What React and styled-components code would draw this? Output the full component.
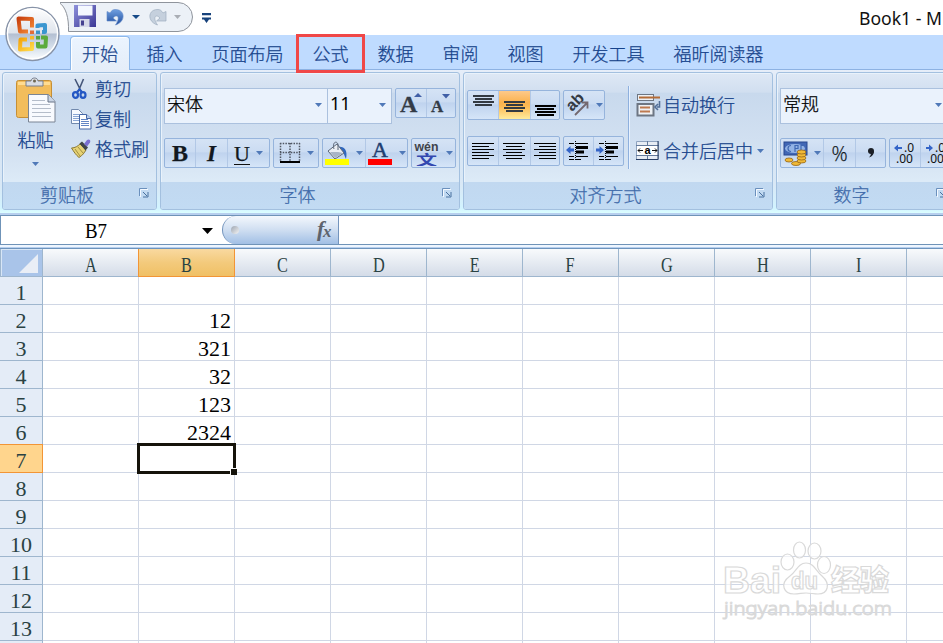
import styled, { createGlobalStyle, css } from "styled-components";

const UI_FONT = `"Noto Sans", "Noto Sans CJK SC", sans-serif`;
const CJK_FONT = `"Noto Sans CJK SC", sans-serif`;
const SHEET_FONT = `"Liberation Serif", "Noto Sans CJK SC", serif`;
const NAVY = "#15428b";

const GlobalStyle = createGlobalStyle`
  * { box-sizing: border-box; }
  body {
    margin: 0;
    overflow: hidden;
    background: #ffffff;
  }
  svg { display: block; flex: none; }
`;

const Window = styled.div`
  position: relative;
  width: 943px;
  height: 643px;
  overflow: hidden;
  font-family: ${CJK_FONT};
  font-weight: 300;
  font-size: 18px;
  color: ${NAVY};
`;

const TitleBar = styled.header`
  height: 35px;
  display: flex;
  justify-content: space-between;
  padding-left: 60px;
  background: #ffffff;
`;

const WindowTitle = styled.div`
  width: 84px;
  padding-top: 6px;
  font-family: ${UI_FONT};
  font-weight: 400;
  font-size: 17.6px;
  line-height: 24px;
  color: #111;
  white-space: nowrap;
`;

const OfficeButton = styled.div`
  position: absolute;
  left: 4px;
  top: 5px;
`;

const TabBar = styled.nav`
  height: 35px;
  display: flex;
  align-items: flex-end;
  padding-left: 70px;
  gap: 5px;
  background: #bfdbff;
  border-bottom: 1px solid #8db2e3;
  -webkit-text-stroke: 0.25px;
`;

const Tab = styled.div`
  height: 34px;
  margin-bottom: -1px;
  padding: 0 12px;
  line-height: 34px;
  white-space: nowrap;
  ${(p) =>
    p.$active &&
    css`
      padding: 0 10.5px 0 11px;
      border: 1px solid #8db8ea;
      border-bottom: 0;
      border-radius: 4px 4px 0 0;
      line-height: 32px;
      background: linear-gradient(#ebf4ff, #e7f0fb 60%, #e5eef9);
      box-shadow: inset 1px 1px 1px #ffffff;
    `}
`;

const RedFrame = styled.div`
  position: absolute;
  left: 296px;
  top: 34px;
  width: 69px;
  height: 39px;
  border: 3px solid #f04747;
`;

const Ribbon = styled.section`
  height: 143px;
  display: flex;
  gap: 3px;
  padding: 2px 0 3px 2px;
  border-left: 1px solid #8db2e3;
  margin-left: -1px;
  background: linear-gradient(#e6eef9, #d5e2f2 20%, #d9e8f6 80%, #d2f4ff 97%, #dcffff);
  -webkit-text-stroke: 0.25px;
`;

const Group = styled.div`
  width: ${(p) => p.$width}px;
  flex: none;
  display: flex;
  flex-direction: column;
  border: 1px solid #a3c0df;
  border-radius: 3px;
  overflow: hidden;
  background: linear-gradient(#dee8f5, #d1dff0 14%, #c8d9ed 15%, #d4e2f2 60%, #dceaf7 79%);
  box-shadow: inset 1px 1px 0 #e9f2fb;
`;

const GroupBody = styled.div`
  height: 110px;
  display: flex;
  flex-direction: ${(p) => (p.$row ? "row" : "column")};
  gap: ${(p) => p.$gap || 0}px;
  padding: ${(p) => p.$pad || "15px 3px 0"};
`;

const Caption = styled.div`
  height: 27px;
  flex: none;
  display: flex;
  align-items: center;
  justify-content: center;
  padding-right: ${(p) => p.$right ?? 7}px;
  background: linear-gradient(#c1d8f0, #c2dbf3);
  color: #3e6aaa;

  span {
    margin: 0 auto;
    padding: 0 ${(p) => p.$shift ?? 8}px 2px 0;
    line-height: 25px;
  }
  svg { margin-bottom: 5px; }
`;

const ToolRow = styled.div`
  display: flex;
  align-items: flex-start;
  gap: ${(p) => p.$gap ?? 3}px;
`;

const Column = styled.div`
  display: flex;
  flex-direction: column;
  gap: ${(p) => p.$gap || 0}px;
`;

const CommandList = styled(Column)`
  margin-top: -3px;
`;

const ToolSet = styled.div`
  display: flex;
  height: 30px;
  flex: none;
  border: 1px solid #96b4dc;
  border-radius: 2px;
  overflow: hidden;
  background: linear-gradient(#d5e3f5, #cbdcf2 45%, #bfd3ee 50%, #d5e5f8);
`;

const Tool = styled.button`
  width: ${(p) => p.$width}px;
  height: 28px;
  display: flex;
  align-items: center;
  justify-content: center;
  gap: 6px;
  padding: 0;
  border: 0;
  color: #111820;
  background: ${(p) =>
    p.$on ? "linear-gradient(#fdc98a, #fbb24d 42%, #fcba55 55%, #ffeb9d)" : "transparent"};

  & + & { border-left: 1px solid #b2c8e6; }
`;

const Glyph = styled.span`
  font-family: "Liberation Serif", serif;
  font-size: ${(p) => p.$size || 24}px;
  font-weight: ${(p) => (p.$bold ? 700 : 400)};
  font-style: ${(p) => (p.$italic ? "italic" : "normal")};
  line-height: 27px;
`;

const Underlined = styled(Glyph)`
  margin-top: 2px;
  line-height: 21px;
  border-bottom: 1px solid #111;
`;

const Percent = styled(Glyph)`
  font-family: "Open Sans", "Noto Sans", sans-serif;
  font-weight: 300;
`;

const Combo = styled.div`
  width: ${(p) => p.$width}px;
  height: 36px;
  flex: none;
  display: flex;
  align-items: center;
  justify-content: space-between;
  padding: 0 5px 6px 2px;
  border: 1px solid #abc1de;
  background: #eaf2fc;
  color: #000;
  font-family: ${(p) => (p.$latin ? UI_FONT : CJK_FONT)};
  font-weight: ${(p) => (p.$latin ? 400 : 300)};
  -webkit-text-stroke: ${(p) => (p.$latin ? "0" : "0.25px")};

  & + & { margin-left: -1px; }
  svg { margin-top: 4px; }
`;

const PasteButton = styled.div`
  width: 60px;
  display: flex;
  flex-direction: column;
  align-items: center;
  gap: 1px;
  padding-left: 1px;
  line-height: 27px;

  svg:last-child { margin-top: 8px; }
`;

const Command = styled.div`
  height: ${(p) => p.$height || 30}px;
  display: flex;
  align-items: center;
  gap: ${(p) => p.$gap || 4}px;
  white-space: nowrap;

  span { margin-top: -2px; }
`;

const Divider = styled.div`
  width: 2px;
  height: 83px;
  margin: -4px 6px 0 4px;
  background: #8eb0de;
  border-right: 1px solid #e8f2ff;
`;

const FormulaBar = styled.div`
  height: 36px;
  padding-top: 2px;
  background: #b7cfee;
  border-bottom: 1px solid #6d94bd;
`;

const FormulaInner = styled.div`
  height: 30px;
  display: flex;
  border: 1px solid #6f93b8;
  border-right: 0;
  background: #ffffff;
  box-shadow: 0 2px 0 #eef6ff;
`;

const NameBox = styled.div`
  width: 221px;
  display: flex;
  align-items: center;
  justify-content: space-between;
  padding: 2px 9px 0 84px;
  font: 22px ${SHEET_FONT};
  color: #000;
`;

const Narrow = styled.span`
  display: inline-block;
  font-size: 22px;
  transform: scaleX(${(p) => p.$by || 0.74});
  transform-origin: ${(p) => p.$origin || "center"};
`;

const FxHandle = styled.div`
  width: 117px;
  display: flex;
  align-items: center;
  justify-content: space-between;
  padding: 0 5px 0 8px;
  border: 1px solid #7394bd;
  border-width: 0 1px 0 1px;
  border-radius: 15px 0 0 15px;
  background: linear-gradient(#f4f8fd, #cfdef1 50%, #a1bfe5);
`;

const Knob = styled.i`
  width: 8px;
  height: 8px;
  border-radius: 50%;
  background: linear-gradient(135deg, #9ca5b1, #f4f4f4);
`;

const Sheet = styled.div`
  display: grid;
  grid-template-columns: 43px repeat(10, 96px);
  grid-auto-rows: 28px;
  font: 22px ${SHEET_FONT};
`;

const ColHead = styled.div`
  display: flex;
  align-items: center;
  justify-content: center;
  padding-top: 4px;
  border: solid #9eb6ce;
  border-width: 0 1px 1px 0;
  background: linear-gradient(#f8fafc, #e6ebf2 50%, #d4dce8);
  color: #2a4243;
  ${(p) =>
    p.$on &&
    css`
      background: linear-gradient(#f9d9a0, #f3ca7c 50%, #f0c065);
      border-color: #f29536;
      box-shadow: -1px 0 0 #f29536;
    `}
`;

const RowHead = styled.div`
  display: flex;
  align-items: center;
  justify-content: center;
  padding-top: 4px;
  border: solid #9eb6ce;
  border-width: 0 1px 1px 0;
  background: ${(p) => (p.$on ? "#ffd58d" : "#e4ecf7")};
  border-color: ${(p) => (p.$on ? "#f29536" : "#9eb6ce")};
  box-shadow: ${(p) => (p.$on ? "0 -1px 0 #f29536" : "none")};
  color: #2a4243;
`;

const Corner = styled.div`
  display: flex;
  align-items: flex-end;
  justify-content: flex-end;
  padding: 0 4px 3px 0;
  border: 1px solid #9eb6ce;
  border-top: 0;
  background: #a9c4e9;
  box-shadow: inset 1px 1px 0 #d8e6f6;
`;

const Cell = styled.div`
  position: relative;
  padding: 2px 3px 0 0;
  border: solid #d0d7e5;
  border-width: 0 1px 1px 0;
  text-align: right;
  line-height: 28px;
  color: #000;
`;

const Selection = styled.div`
  position: absolute;
  z-index: 1;
  left: -2px;
  top: -2px;
  width: 99px;
  height: 31px;
  border: 3px solid #15130a;

  &::after {
    content: "";
    position: absolute;
    right: -4px;
    bottom: -4px;
    width: 6px;
    height: 6px;
    background: #15130a;
    border: solid #fff;
    border-width: 1px 0 0 1px;
  }
`;

const Watermark = styled.svg`
  position: absolute;
  left: 716px;
  top: 536px;
`;

const Arrow = ({ size = 7, color = "#5079b8" }) => (
  <svg width={size} height={size / 2 + 0.5} viewBox="0 0 8 4" preserveAspectRatio="none">
    <path d="M0 0h8L4 4z" fill={color} />
  </svg>
);

const Launcher = () => (
  <svg width="10" height="10" fill="none" stroke="#6b90bd">
    <path d="M.5 8V.5H8" />
    <path d="M4 4l4 4M9 4v5H4" stroke="#49719f" />
    <path d="M1.5 9V1.5H9" stroke="#f4f9ff" />
  </svg>
);

const OfficeLogo = () => (
  <svg width="58" height="58" viewBox="0 0 58 58">
    <defs>
      <linearGradient id="orb" x2="0" y2="1">
        <stop stopColor="#ffffff" />
        <stop offset=".48" stopColor="#dfe4ec" />
        <stop offset=".5" stopColor="#b3bfd2" />
        <stop offset=".8" stopColor="#dce5ef" />
        <stop offset="1" stopColor="#ffffff" />
      </linearGradient>
      <linearGradient id="orange" x2="1" y2="1">
        <stop stopColor="#c8400f" />
        <stop offset="1" stopColor="#f58a35" />
      </linearGradient>
      <linearGradient id="yellow" x2="1" y2="1">
        <stop stopColor="#f5a50c" />
        <stop offset="1" stopColor="#ffd84a" />
      </linearGradient>
    </defs>
    <circle cx="28.5" cy="29" r="26.5" fill="url(#orb)" stroke="#8793a8" strokeWidth="1.4" />
    <circle cx="28.5" cy="28.7" r="25" fill="none" stroke="#fff" strokeWidth="1.3" />
    <g fill="none" strokeWidth="4" strokeLinejoin="round">
      <path d="M24 26.500h-8L14.500 13.500 28 14v8.500" stroke="url(#orange)" />
      <path d="M33.500 23v-2.500l7.500 -.5v7h-3" stroke="#3b96d0" />
      <path d="M23 34.500h-6.500l-.5 10 12-.5v-7" stroke="url(#yellow)" />
      <path d="M37 32.500h5l-.5 9h-7.500V37" stroke="#5cab3d" />
    </g>
    <path d="M26 25.500h4v3.500h-4z" fill="#e36c37" />
    <path d="M32 25.500h4v3.500h-4z" fill="#3c93c9" />
    <path d="M26 31h4v3.500h-4z" fill="#f7b82b" />
    <path d="M32 31h4v3.500h-4z" fill="#57a443" />
  </svg>
);

const QuickAccess = () => (
  <svg width="155" height="34" viewBox="60 0 155 34">
    <defs>
      <linearGradient id="disk" x2="1" y2="1">
        <stop stopColor="#8e91db" />
        <stop offset="1" stopColor="#3b3795" />
      </linearGradient>
      <linearGradient id="undo" x2="0" y2="1">
        <stop stopColor="#6f9fe0" />
        <stop offset="1" stopColor="#224f9e" />
      </linearGradient>
    </defs>
    <path d="M59 2.500H178A14.500 14.500 0 0 1 178 31.500H68.500C69 18 66 7 59 2.500z" fill="#ecf1f7" stroke="#8f949c" />
    <path d="M74 5h22v22H74z" fill="url(#disk)" />
    <path d="M78 5.500h14.500v10H78z" fill="#f4f8ff" />
    <path d="M79.500 19h10v8h-10z" fill="#d6d9e9" />
    <path d="M81 20.500h3v5h-3z" fill="#454190" />
    <path d="M107 11.500V21h9.500l-3.500-3c4-4.500 8-1 2.500 7 11-3.500 9.500-16-.5-15.500-2 0-3.500 1-5 3.500z" fill="url(#undo)" stroke="#5f88c8" strokeWidth=".6" />
    <path d="M166 11.500V21h-9.500l3.500-3c-4-4.500-8-1-2.500 7-11-3.500-9.500-16 .5-15.500 2 0 3.500 1 5 3.500z" fill="#c5d0dd" stroke="#9eadbf" strokeWidth=".7" />
    <path d="M132 15h8l-4 4z" fill="#164a88" />
    <path d="M174 15h7l-3.500 4z" fill="#a9adb4" />
    <path d="M202 13h9v2.300h-9zM202 17.500h9v2h-2l-2.500 3.500-2.500-3.500h-2z" fill="#17427b" />
  </svg>
);

const PasteIcon = () => (
  <svg width="42" height="48" viewBox="0 0 42 48">
    <rect x="1.500" y="3.500" width="35" height="37" rx="2" fill="#f2bd5c" stroke="#c68f35" />
    <path d="M3 5h32v3H3z" fill="#ffdc91" />
    <path d="M11 8V4h5c0-4 7-4 7 0h5v5H11z" fill="#d9dde3" stroke="#777f8c" />
    <circle cx="19.500" cy="4" r="1.500" fill="#6d6652" />
    <path d="M13.500 17.500h20l6.500 7v20.500H13.500z" fill="#f8fafe" stroke="#7a8494" />
    <path d="M33 17.500V25h7" fill="#c9d4e4" stroke="#687488" />
    <path d="M17 23.500h13M17 27.500h18M17 31.500h19M17 35.500h19M17 39.500h19" stroke="#b5bdca" />
  </svg>
);

const CutIcon = () => (
  <svg width="20" height="22" viewBox="0 0 20 22" fill="none">
    <path d="M4 1l6.500 13M12.500 1L7 14" stroke="#46577a" strokeWidth="1.600" />
    <ellipse cx="4.500" cy="17" rx="2.500" ry="2.800" stroke="#2458c4" strokeWidth="2.200" />
    <ellipse cx="12" cy="17" rx="2.500" ry="2.800" stroke="#2458c4" strokeWidth="2.200" />
    <path d="M6 14l2.500-2.500L11 14" stroke="#2458c4" strokeWidth="2" />
  </svg>
);

const CopyIcon = () => (
  <svg width="22" height="22" viewBox="0 0 22 22" stroke="#7189ad">
    <path d="M.5 1.500h7l4 4v10H.5z" fill="#f8fbff" />
    <path d="M2 6.500h6M2 8.500h7M2 10.500h7M2 12.500h7" stroke="#89a6d3" />
    <path d="M8.500 6.500h7l4.500 4v10.500H8.500z" fill="#fff" stroke="#4567a6" />
    <path d="M10 11.500h7M10 13.500h8M10 15.500h8M10 17.500h8" stroke="#6285c4" />
    <path d="M15.500 6.500v4H20" fill="#b9cdec" stroke="#4567a6" />
  </svg>
);

const BrushIcon = () => (
  <svg width="22" height="20" viewBox="0 0 22 20">
    <path d="M.5 9C4 9 7 7 9 5l6 6c-2 3-3 5-7 7.500C5 16 3 13 .5 9z" fill="#e6d274" stroke="#8a7834" />
    <path d="M4 10l5 7M7 8l5 6" stroke="#a39044" />
    <path d="M8.500 4.500l2.500-2 6 6-2.500 3z" fill="#40454a" />
    <path d="M13 5l3-4c2-1.500 4 0 3 2.500l-3 4z" fill="#7b6fd0" />
  </svg>
);

const BordersIcon = () => (
  <svg width="22" height="22" fill="none" stroke="#4f5662">
    <path d="M1.500 1v18M11 1v18M20.500 1v18M1 1.500h20M1 10.500h20" strokeWidth="1.500" strokeDasharray="1.500 1.200" />
    <path d="M1 20h20" stroke="#000" strokeWidth="2" />
  </svg>
);

const FillIcon = () => (
  <svg width="25" height="24" viewBox="0 0 25 24">
    <path d="M13 6c6-1 10 3 8 12-2-4-2-7-5-9z" fill="#3168bd" />
    <path d="M3 10l9-7 7 9-9 6z" fill="#e9edf3" stroke="#5b6778" />
    <path d="M5 11l8 0 5 1-8 5z" fill="#a8b4c6" />
    <path d="M9 8c-2-6 2-9 4-5v6" fill="none" stroke="#5b6778" />
    <path d="M0 18h24v6H0z" fill="#ffff00" />
  </svg>
);

const FontColorIcon = () => (
  <svg width="25" height="24">
    <text x="12" y="16" textAnchor="middle" fontFamily="Liberation Serif, serif" fontSize="22" fill="#203d70" stroke="#203d70" strokeWidth=".5">A</text>
    <path d="M0 18h24v6H0z" fill="#ff0000" />
  </svg>
);

const PinyinIcon = () => (
  <svg width="26" height="26">
    <text x="12.500" y="11" textAnchor="middle" fontFamily="Liberation Sans, sans-serif" fontSize="13" fontWeight="700" textLength="24" lengthAdjust="spacingAndGlyphs" fill="#3f434a">wén</text>
    <text x="12.500" y="24.500" textAnchor="middle" fontFamily="Noto Sans CJK SC, sans-serif" fontSize="14" fontWeight="700" textLength="21" lengthAdjust="spacingAndGlyphs" fill="#3348af">文</text>
  </svg>
);

const SizeLetter = ({ size, up }) => (
  <svg width="28" height="26">
    <text x={up ? 3 : 4} y="21.500" fontFamily="Liberation Serif, serif" fontWeight="700" fontSize={size} fill="#333b46" stroke="#333b46" strokeWidth=".3">A</text>
    <path d={up ? "M17 7h8l-4-4z" : "M15 4h8l-4 4.500z"} fill="#405fa6" />
  </svg>
);

// every entry is [left, right] of one text line
const LINES = {
  top: [[2, 23], [4, 21], [2, 23], [4, 21]],
  left: [[0, 22], [0, 17], [0, 22], [0, 17], [0, 22], [0, 17]],
  center: [[0, 22], [3, 19], [0, 22], [3, 19], [0, 22], [3, 19]],
  right: [[0, 22], [5, 22], [0, 22], [5, 22], [0, 22], [5, 22]],
};

const AlignIcon = ({ kind, offset = 0, tight }) => (
  <svg width={tight ? 25 : 23} height="26" stroke={tight && offset < 12 ? "#333a42" : "#000"}>
    {LINES[tight ? "top" : kind].map(([a, b], i) => (
      <path
        key={i}
        d={`M${a} ${tight ? offset + i * 3 : 5.5 + i * 3}H${b}`}
        strokeWidth={tight ? 1.8 : 1}
      />
    ))}
  </svg>
);

const OrientIcon = () => (
  <svg width="25" height="25">
    <text transform="translate(7 19) rotate(-45)" fontFamily="Liberation Sans, sans-serif" fontWeight="700" fontSize="16" fill="#343a43">ab</text>
    <path d="M10 22L22 10M16.500 9.500h6v6" fill="none" stroke="#73686f" strokeWidth="1.800" />
  </svg>
);

const IndentIcon = ({ right }) => (
  <svg width="25" height="22" stroke="#000">
    <path d="M3 3.500h5M3 16.500h5M10 3.500h12M10 16.500h12M3 19.500h5M10 19.500h5" />
    <path d="M10 7.500h12" strokeWidth="3" />
    <path d="M10 12h8" strokeWidth="3" />
    <path d="M9.500 1v20" strokeDasharray="1 1" />
    <path
      d={right ? "M8 10L3.500 6v2.500H0v3h3.500v2.500z" : "M0 10L4.500 6v2.500H8v3H4.500v2.500z"}
      fill="#3465c8"
      stroke="none"
    />
  </svg>
);

const WrapIcon = () => (
  <svg width="25" height="24">
    <rect x="1.500" y="1.500" width="16" height="6" fill="#eef1f5" stroke="#6d7683" />
    <path d="M3 4.500h21" stroke="#b36c38" strokeWidth="2" />
    <rect x="1.500" y="11" width="16" height="11.500" fill="#eef1f5" stroke="#6d7683" strokeWidth="2" />
    <path d="M4 14.500h10M4 18.500h10" stroke="#bd7a50" strokeWidth="2" />
    <path d="M23.500 8v6h-2.500M22 11l-3 3 3 3" fill="none" stroke="#526f98" strokeWidth="1.600" />
  </svg>
);

const MergeIcon = () => (
  <svg width="23" height="20">
    <path d="M.5.5h22v18H.5z" fill="#e8edf4" stroke="#8fa3bf" />
    <path d="M0 4.500h23M0 14.500h23M11.500 0v4M11.500 15v4" stroke="#647a9b" />
    <path d="M1 5h21v9H1z" fill="#fff" />
    <path d="M2 9.500h5M4 7.500L2 9.500l2 2M21 9.500h-5M19 7.500l2 2-2 2" fill="none" stroke="#111" />
    <text x="11.500" y="13" textAnchor="middle" fontFamily="Liberation Sans, sans-serif" fontWeight="700" fontSize="11">a</text>
    <path d="M22 0v18.500H0" fill="none" stroke="#283e65" />
  </svg>
);

const CurrencyIcon = () => (
  <svg width="25" height="26">
    <rect x="1" y="2" width="23" height="13" fill="#4167b5" stroke="#28498f" />
    <ellipse cx="12" cy="8.500" rx="10" ry="4.500" fill="#93b3e5" />
    <path d="M8 5.500c-4 0-4 6 0 6M12 12V5.500h3v3h-3M18 12V5.500h3" fill="none" stroke="#3f68b2" strokeWidth="1.200" />
    <g fill="#f0b936" stroke="#93651a" strokeWidth=".8">
      <ellipse cx="6" cy="20" rx="4" ry="2" />
      <ellipse cx="13" cy="23.500" rx="4.500" ry="2" />
      <ellipse cx="18.500" cy="21" rx="4.500" ry="2" />
      <ellipse cx="18.500" cy="18" rx="4.500" ry="2" />
      <ellipse cx="18.500" cy="15" rx="4.500" ry="2" />
      <ellipse cx="18.500" cy="12" rx="4.500" ry="2" />
    </g>
  </svg>
);

const CommaIcon = () => (
  <svg width="8" height="12">
    <circle cx="4" cy="4" r="3" fill="#1b1f26" />
    <path d="M7 4c0 3-1.500 5.500-5 6.500 1.500-1.500 2-3 2-5z" fill="#1b1f26" />
  </svg>
);

const DecimalIcon = ({ right }) => (
  <svg width="24" height="26" fontFamily="Noto Sans, sans-serif" fontSize="12" fill="#111">
    <text x="11" y="12">.0</text>
    <text x="3" y="22.500">.00</text>
    <path
      d={right ? "M9 8L5 4.500v2.500H2v2h3v2.500z" : "M1 8l4-3.500v2.500h4v2H5v2.500z"}
      fill="#3465c8"
    />
  </svg>
);

const FxIcon = () => (
  <svg width="20" height="24" fontFamily="Liberation Serif, serif" fontStyle="italic" fontWeight="700" fill="#5d636d">
    <text x="4" y="18" fontSize="22">f</text>
    <text x="10" y="19" fontSize="17">x</text>
  </svg>
);

const BaiduMark = () => (
  <Watermark width="190" height="94" viewBox="716 536 190 94">
    <g fill="#ffffff" fillOpacity=".65" stroke="#d9d9d9" strokeWidth="1.200">
      <ellipse cx="787.500" cy="562" rx="6.500" ry="8" />
      <ellipse cx="799.500" cy="550" rx="6" ry="8" />
      <ellipse cx="814.500" cy="551" rx="6.500" ry="8" />
      <ellipse cx="824" cy="565" rx="6.500" ry="8.500" />
      <path d="M806 563c-8 0-10 9-16 13-11 8-6 18 4 18 5 0 8-1 12-1s8 1 12 1c10 0 13-10 4-18-6-5-8-13-16-13z" />
      <g fontFamily="Liberation Sans, Noto Sans CJK SC, sans-serif" fontWeight="700">
        <text x="723" y="593" fontSize="37" textLength="58" lengthAdjust="spacingAndGlyphs">Bai</text>
        <text x="791" y="589" fontSize="23" textLength="27" lengthAdjust="spacingAndGlyphs">du</text>
        <text x="831" y="591" fontSize="29" fontWeight="900">经验</text>
      </g>
      <text x="724" y="615" fontFamily="Noto Sans, sans-serif" fontSize="19" strokeWidth="1" textLength="168" lengthAdjust="spacingAndGlyphs">jingyan.baidu.com</text>
    </g>
  </Watermark>
);

const tabs = ["开始", "插入", "页面布局", "公式", "数据", "审阅", "视图", "开发工具", "福昕阅读器"];
const columns = ["A", "B", "C", "D", "E", "F", "G", "H", "I", ""];
const rows = Array.from({ length: 14 }, (_, i) => i + 1);
const values = { B2: 12, B3: 321, B4: 32, B5: 123, B6: 2324 };
const active = { col: "B", row: 7 };

function ClipboardGroup() {
  return (
    <Group $width={155}>
      <GroupBody $row $gap={6} $pad="4px 0 0 2px">
        <PasteButton>
          <PasteIcon />
          <span>粘贴</span>
          <Arrow />
        </PasteButton>
        <CommandList>
          <Command $gap={4}><CutIcon /><span>剪切</span></Command>
          <Command $gap={2}><CopyIcon /><span>复制</span></Command>
          <Command $gap={2}><BrushIcon /><span>格式刷</span></Command>
        </CommandList>
      </GroupBody>
      <Caption><span>剪贴板</span><Launcher /></Caption>
    </Group>
  );
}

function FontGroup() {
  return (
    <Group $width={300}>
      <GroupBody $gap={14}>
        <ToolRow>
          <ToolRow $gap={0}>
            <Combo $width={164}>宋体<Arrow /></Combo>
            <Combo $width={65} $latin>11<Arrow /></Combo>
          </ToolRow>
          <ToolSet>
            <Tool $width={30}><SizeLetter size={24} up /></Tool>
            <Tool $width={29}><SizeLetter size={17} /></Tool>
          </ToolSet>
        </ToolRow>
        <ToolRow>
          <ToolSet>
            <Tool $width={30}><Glyph $bold>B</Glyph></Tool>
            <Tool $width={32}><Glyph $bold $italic $size={23}>I</Glyph></Tool>
            <Tool $width={42}><Underlined $size={22}>U</Underlined><Arrow /></Tool>
          </ToolSet>
          <ToolSet>
            <Tool $width={44}><BordersIcon /><Arrow /></Tool>
          </ToolSet>
          <ToolSet>
            <Tool $width={42}><FillIcon /><Arrow /></Tool>
            <Tool $width={42}><FontColorIcon /><Arrow /></Tool>
          </ToolSet>
          <ToolSet>
            <Tool $width={43}><PinyinIcon /><Arrow /></Tool>
          </ToolSet>
        </ToolRow>
      </GroupBody>
      <Caption><span>字体</span><Launcher /></Caption>
    </Group>
  );
}

function AlignGroup() {
  return (
    <Group $width={310}>
      <GroupBody $row $pad="17px 3px 0">
        <Column $gap={16}>
          <ToolRow>
            <ToolSet>
              <Tool $width={30}><AlignIcon tight offset={4} /></Tool>
              <Tool $width={32} $on><AlignIcon tight offset={10} /></Tool>
              <Tool $width={29}><AlignIcon tight offset={14} /></Tool>
            </ToolSet>
            <ToolSet>
              <Tool $width={40}><OrientIcon /><Arrow /></Tool>
            </ToolSet>
          </ToolRow>
          <ToolRow>
            <ToolSet>
              <Tool $width={30}><AlignIcon kind="left" /></Tool>
              <Tool $width={32}><AlignIcon kind="center" /></Tool>
              <Tool $width={29}><AlignIcon kind="right" /></Tool>
            </ToolSet>
            <ToolSet>
              <Tool $width={29}><IndentIcon /></Tool>
              <Tool $width={30}><IndentIcon right /></Tool>
            </ToolSet>
          </ToolRow>
        </Column>
        <Divider />
        <Column $gap={16}>
          <Command $gap={2}><WrapIcon /><span>自动换行</span></Command>
          <Command $gap={4}><MergeIcon /><span>合并后居中</span><Arrow /></Command>
        </Column>
      </GroupBody>
      <Caption><span>对齐方式</span><Launcher /></Caption>
    </Group>
  );
}

function NumberGroup() {
  return (
    <Group $width={176}>
      <GroupBody $gap={14}>
        <Combo $width={168}>常规<Arrow /></Combo>
        <ToolRow>
          <ToolSet>
            <Tool $width={42}><CurrencyIcon /><Arrow /></Tool>
            <Tool $width={32}><Percent $size={20}>%</Percent></Tool>
            <Tool $width={30}><CommaIcon /></Tool>
          </ToolSet>
          <ToolSet>
            <Tool $width={30}><DecimalIcon /></Tool>
            <Tool $width={30}><DecimalIcon right /></Tool>
          </ToolSet>
        </ToolRow>
      </GroupBody>
      <Caption $right={5} $shift={10}><span>数字</span><Launcher /></Caption>
    </Group>
  );
}

export default function App() {
  return (
    <Window>
      <GlobalStyle />
      <TitleBar>
        <QuickAccess />
        <WindowTitle>Book1 - Microsoft Excel</WindowTitle>
      </TitleBar>
      <TabBar>
        {tabs.map((tab, i) => (
          <Tab key={tab} $active={i === 0}>{tab}</Tab>
        ))}
      </TabBar>
      <OfficeButton><OfficeLogo /></OfficeButton>
      <RedFrame />

      <Ribbon>
        <ClipboardGroup />
        <FontGroup />
        <AlignGroup />
        <NumberGroup />
      </Ribbon>

      <FormulaBar>
        <FormulaInner>
          <NameBox>
            <Narrow $by={0.86} $origin="left">B7</Narrow>
            <Arrow size={11} color="#000" />
          </NameBox>
          <FxHandle>
            <Knob />
            <FxIcon />
          </FxHandle>
        </FormulaInner>
      </FormulaBar>

      <Sheet>
        <Corner>
          <svg width="19" height="19"><path d="M19 0v19H0z" fill="#e9eef6" /></svg>
        </Corner>
        {columns.map((col) => (
          <ColHead key={col} $on={col === active.col}><Narrow>{col}</Narrow></ColHead>
        ))}
        {rows.map((row) => [
          <RowHead key={row} $on={row === active.row}>{row}</RowHead>,
          ...columns.map((col) => (
            <Cell key={col + row}>
              {values[col + row]}
              {col === active.col && row === active.row && <Selection />}
            </Cell>
          )),
        ])}
      </Sheet>
      <BaiduMark />
    </Window>
  );
}
